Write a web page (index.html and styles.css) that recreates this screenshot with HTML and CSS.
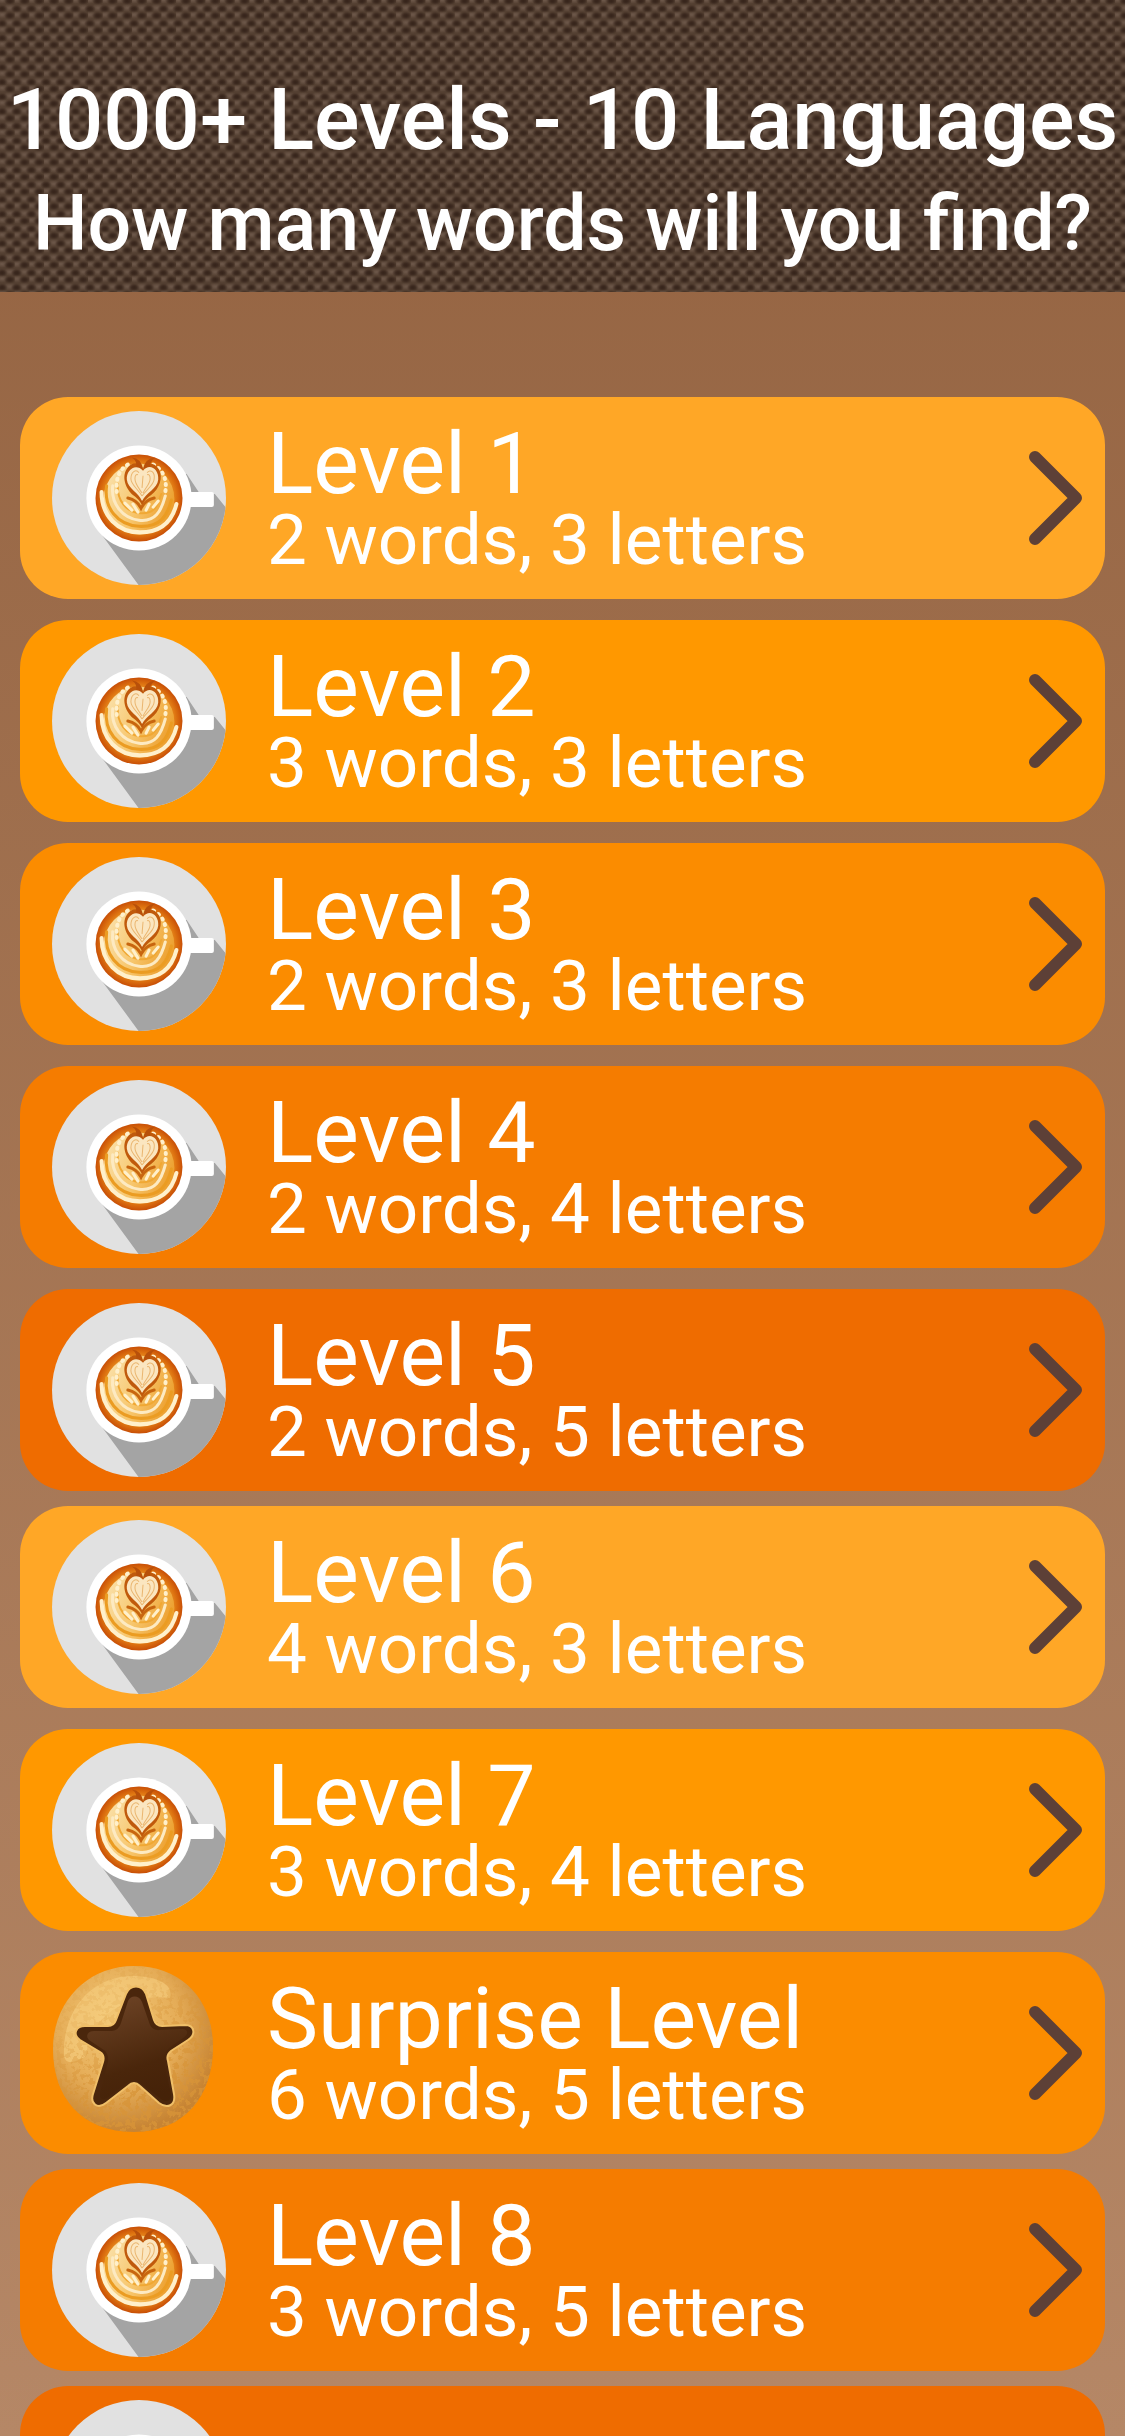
FILE: index.html
```html
<!DOCTYPE html>
<html lang="en">
<head>
    <meta charset="UTF-8">
    <title>Levels</title>
    <link rel="stylesheet" href="styles.css">
</head>
<body>
    <svg class="sprite" aria-hidden="true">
        <defs>
            <radialGradient id="coffee" cx="0.5" cy="0.5" r="0.5">
                <stop offset="0" stop-color="#f5b850"/>
                <stop offset="0.7" stop-color="#ee9c28"/>
                <stop offset="0.86" stop-color="#dd7210"/>
                <stop offset="1" stop-color="#c84f06"/>
            </radialGradient>
            <linearGradient id="foam" x1="0" y1="0.3" x2="1" y2="0.7">
                <stop offset="0" stop-color="#fae0a8"/>
                <stop offset="0.5" stop-color="#f7c66c"/>
                <stop offset="1" stop-color="#eb9a26"/>
            </linearGradient>
            <radialGradient id="dough" cx="0.4" cy="0.35" r="0.65">
                <stop offset="0" stop-color="#f4cb7a"/>
                <stop offset="0.6" stop-color="#e5ac57"/>
                <stop offset="1" stop-color="#c78433"/>
            </radialGradient>
            <linearGradient id="choco" x1="0.2" y1="0" x2="0.5" y2="1">
                <stop offset="0" stop-color="#6e4426"/>
                <stop offset="0.7" stop-color="#4a260b"/>
                <stop offset="1" stop-color="#452208"/>
            </linearGradient>
            <filter id="crumbs" x="0" y="0" width="1" height="1">
                <feTurbulence type="fractalNoise" baseFrequency="0.19" numOctaves="3" seed="8"/>
                <feColorMatrix values="0 0 0 0 0.68  0 0 0 0 0.3  0 0 0 0 0.04  0 0 0 12 -6"/>
                <feComposite in2="SourceGraphic" operator="in"/>
            </filter>
            <linearGradient id="crumb-fade" x1="0.25" y1="0.1" x2="0.65" y2="0.9">
                <stop offset="0.2" stop-color="#fff" stop-opacity="0.15"/>
                <stop offset="0.8" stop-color="#fff" stop-opacity="0.8"/>
            </linearGradient>
            <mask id="crumb-mask"><rect width="174" height="174" fill="url(#crumb-fade)"/></mask>
            <clipPath id="saucer"><circle cx="87" cy="86" r="86"/></clipPath>
        </defs>
        <symbol id="cup" viewBox="1 0 172 172">
            <circle cx="87" cy="86" r="86" fill="#e1e1e1"/>
            <path clip-path="url(#saucer)" fill="#a4a4a4" d="M50 122L88 174H174V97L162 82L146 80L134 62Z"/>
            <rect x="130" y="80" width="31" height="15" rx="2" fill="#fff"/>
            <circle cx="87" cy="86" r="52" fill="#fff"/>
            <circle cx="87" cy="86" r="43" fill="url(#coffee)"/>
            <circle cx="87" cy="87" r="35" fill="url(#foam)"/>
            <g fill="none" stroke-linecap="round">
                <path d="M50 80C50 104 66 120 88 120S120 108 124 92" stroke="#fff0cb" stroke-width="4"/>
                <path d="M55 74C52 96 66 113 87 114S115 104 119 88" stroke="#eb9c22" stroke-width="3"/>
                <path d="M61 74C59 92 71 106 87 108S109 99 113 84" stroke="#fdeac2" stroke-width="3"/>
                <path d="M66 72C65 88 74 100 88 101S105 95 109 82" stroke="#f0a834" stroke-width="2"/>
                <path d="M76 53C67 58 64 67 65 80M101 53C111 58 115 68 113 80" stroke="#fff0cb" stroke-width="4" stroke-dasharray="1 5"/>
                <path d="M73 91L80 98M81 92L86 100M94 98L97 92M101 95L106 89" stroke="#fff0cb" stroke-width="3"/>
                <path d="M76 86Q85 88 89 96Q93 88 102 86" stroke="#c8660f" stroke-width="3"/>
            </g>
            <path fill="#c05a0c" d="M91 57C88 50 80 50 75 57C69 66 75 78 81 83Q87 87 90 93Q93 87 99 83C107 77 111 66 107 58C102 50 94 50 91 57Z"/>
            <path fill="#b8500a" d="M80 46Q89 47 91 57Q93 47 103 46Q97 51 98 56L84 57Q86 50 80 46Z"/>
            <path fill="#fbe6c0" d="M90 89C87 81 76 77 75 68C74 58 84 51 91 59C97 51 107 57 106 68C105 77 94 81 90 89Z"/>
            <g fill="none" stroke="#eab670">
                <path d="M90 84C86 77 79 73 79 67C79 60 84 57 87 61"/>
                <path d="M90 81C86 75 83 72 83 67Q83 62 86 63M90 84C95 77 102 73 102 67C103 60 98 57 95 61M91 81C94 75 98 72 98 67Q98 62 95 63M91 64L90 76"/>
            </g>
        </symbol>
        <symbol id="cookie" viewBox="0 2 174 174">
            <path d="M82 2C130 2 161 36 161 83C161 132 132 168 82 168C30 168 1 134 1 85C1 38 35 2 82 2Z" fill="url(#dough)"/>
            <path d="M12 92C10 44 42 10 84 12C108 13 122 22 118 34C86 30 40 42 34 92C24 98 14 102 12 92Z" fill="#f6cf80" opacity="0.6"/>
            <g mask="url(#crumb-mask)">
                <path filter="url(#crumbs)" d="M82 2C130 2 161 36 161 83C161 132 132 168 82 168C30 168 1 134 1 85C1 38 35 2 82 2Z"/>
            </g>
            <path d="M74 30C78 20 90 20 94 30L102 56Q104 62 110 62L133 61C143 61 144 71 136 76L119 87Q114 91 116 97L122 130C124 142 115 145 107 139L88 122Q82 116 76 122L54 139C45 146 38 139 41 130L51 98Q53 91 48 88L28 76C20 70 24 62 33 62L56 62Q62 62 64 56Z" fill="#4a260c" stroke="#f0bf68" stroke-width="2"/>
            <path d="M76 37C79 31 87 31 90 38L98 61Q101 67 108 66L131 65C137 66 136 71 131 74L117 84Q111 90 112 97L119 130C120 137 114 139 109 135L88 119Q82 114 76 118L55 134Q47 138 48 129L56 98Q57 90 52 86L37 76C33 72 36 67 42 67L60 67Q67 66 69 59Z" fill="url(#choco)"/>
        </symbol>
        <symbol id="chevron" viewBox="0 0 54 94">
            <path d="M6 6L47 47L6 88" fill="none" stroke="#5d4037" stroke-width="12" stroke-linecap="round" stroke-linejoin="round"/>
        </symbol>
    </svg>

    <header class="banner">
        <svg class="weave" aria-hidden="true">
            <defs>
                <radialGradient id="knot">
                    <stop offset="0" stop-color="#35231a"/>
                    <stop offset="0.4" stop-color="#35231a" stop-opacity="0.8"/>
                    <stop offset="1" stop-color="#35231a" stop-opacity="0"/>
                </radialGradient>
                <radialGradient id="thread">
                    <stop offset="0" stop-color="#6f5a4c"/>
                    <stop offset="1" stop-color="#6f5a4c" stop-opacity="0"/>
                </radialGradient>
                <pattern id="fabric" width="14.67" height="14.67" viewBox="0 0 15 15" patternUnits="userSpaceOnUse">
                    <rect width="15" height="15" fill="#533f31"/>
                    <ellipse cx="2" cy="0" rx="7" ry="4" fill="url(#thread)"/>
                    <ellipse cx="2" cy="15" rx="7" ry="4" fill="url(#thread)"/>
                    <ellipse cx="10" cy="8" rx="7" ry="4" fill="url(#thread)"/>
                    <ellipse cx="-5" cy="8" rx="7" ry="4" fill="url(#thread)"/>
                    <ellipse cx="10" cy="1" rx="6" ry="4" fill="url(#knot)"/>
                    <ellipse cx="10" cy="16" rx="6" ry="4" fill="url(#knot)"/>
                    <ellipse cx="2" cy="9" rx="6" ry="4" fill="url(#knot)"/>
                    <ellipse cx="17" cy="9" rx="6" ry="4" fill="url(#knot)"/>
                </pattern>
            </defs>
            <rect width="100%" height="100%" fill="url(#fabric)"/>
        </svg>
        <h1>1000+ Levels - 10 Languages</h1>
        <p>How many words will you find?</p>
    </header>

    <main class="levels">
        <a class="level amber" href="#level-1">
            <svg class="icon"><use href="#cup"/></svg>
            <div class="info">
                <h2>Level 1</h2>
                <p>2 words, 3 letters</p>
            </div>
            <svg class="arrow"><use href="#chevron"/></svg>
        </a>
        <a class="level orange" href="#level-2">
            <svg class="icon"><use href="#cup"/></svg>
            <div class="info">
                <h2>Level 2</h2>
                <p>3 words, 3 letters</p>
            </div>
            <svg class="arrow"><use href="#chevron"/></svg>
        </a>
        <a class="level tangerine" href="#level-3">
            <svg class="icon"><use href="#cup"/></svg>
            <div class="info">
                <h2>Level 3</h2>
                <p>2 words, 3 letters</p>
            </div>
            <svg class="arrow"><use href="#chevron"/></svg>
        </a>
        <a class="level pumpkin" href="#level-4">
            <svg class="icon"><use href="#cup"/></svg>
            <div class="info">
                <h2>Level 4</h2>
                <p>2 words, 4 letters</p>
            </div>
            <svg class="arrow"><use href="#chevron"/></svg>
        </a>
        <a class="level rust" href="#level-5">
            <svg class="icon"><use href="#cup"/></svg>
            <div class="info">
                <h2>Level 5</h2>
                <p>2 words, 5 letters</p>
            </div>
            <svg class="arrow"><use href="#chevron"/></svg>
        </a>
        <a class="level amber snug" href="#level-6">
            <svg class="icon"><use href="#cup"/></svg>
            <div class="info">
                <h2>Level 6</h2>
                <p>4 words, 3 letters</p>
            </div>
            <svg class="arrow"><use href="#chevron"/></svg>
        </a>
        <a class="level orange" href="#level-7">
            <svg class="icon"><use href="#cup"/></svg>
            <div class="info">
                <h2>Level 7</h2>
                <p>3 words, 4 letters</p>
            </div>
            <svg class="arrow"><use href="#chevron"/></svg>
        </a>
        <a class="level tangerine" href="#surprise">
            <svg class="icon"><use href="#cookie"/></svg>
            <div class="info">
                <h2>Surprise Level</h2>
                <p>6 words, 5 letters</p>
            </div>
            <svg class="arrow"><use href="#chevron"/></svg>
        </a>
        <a class="level pumpkin snug" href="#level-8">
            <svg class="icon"><use href="#cup"/></svg>
            <div class="info">
                <h2>Level 8</h2>
                <p>3 words, 5 letters</p>
            </div>
            <svg class="arrow"><use href="#chevron"/></svg>
        </a>
        <a class="level rust snug" href="#level-9">
            <svg class="icon"><use href="#cup"/></svg>
            <div class="info"></div>
            <svg class="arrow"><use href="#chevron"/></svg>
        </a>
    </main>
</body>
</html>
```
FILE: styles.css
```css
:root {
    --text-color: #ffffff;
    --gap: 21px;
}

* {
    box-sizing: border-box;
}

body {
    margin: 0;
    height: 100vh;
    overflow: hidden;
    background: linear-gradient(#936240, #b58766);
    font-family: Roboto, sans-serif;
    color: var(--text-color);
}

h1, h2, p {
    margin: 0;
}

.sprite {
    position: absolute;
    width: 0;
    height: 0;
}

.banner {
    position: relative;
    padding: 68px 0 16px;
    text-align: center;
    font-weight: 500;
    white-space: nowrap;
}

/* woven fabric behind the heading */
.weave {
    position: absolute;
    inset: 0;
    z-index: -1;
    width: 100%;
    height: 100%;
}

.banner h1 {
    font-size: 85px;
    line-height: 104px;
    font-weight: 500;
}

.banner p {
    font-size: 77px;
    line-height: 104px;
}

.levels {
    display: flex;
    flex-direction: column;
    gap: var(--gap);
    padding: 105px 20px 0;
}

.level {
    display: flex;
    align-items: center;
    flex-shrink: 0;
    height: 202px;
    padding: 0 22px 0 32px;
    border-radius: 48px;
    color: var(--text-color);
    text-decoration: none;
}

.snug {
    margin-top: -6px;
}

.amber { background: #ffa726; }
.orange { background: #ff9800; }
.tangerine { background: #fb8c00; }
.pumpkin { background: #f57c00; }
.rust { background: #ef6c00; }

.icon {
    width: 174px;
    height: 174px;
}

.info {
    flex: 1;
    padding: 4px 0 0 41px;
}

.info h2 {
    font-size: 86px;
    line-height: 80px;
    font-weight: 400;
}

.info p {
    font-size: 71px;
    line-height: 72px;
}

.arrow {
    width: 54px;
    height: 94px;
}
```
